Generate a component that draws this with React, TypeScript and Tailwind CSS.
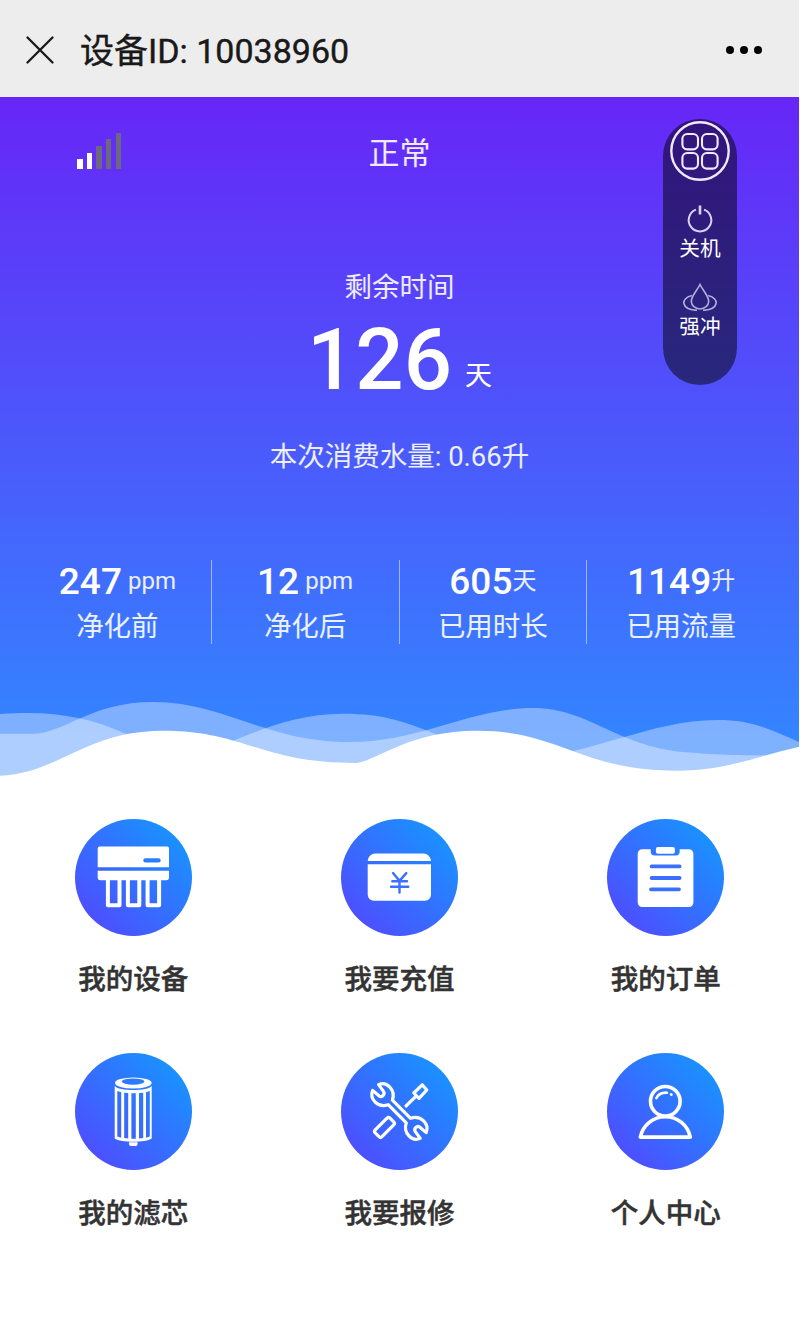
import type { ReactNode } from "react";

const stats = [
  { value: "247", unit: "ppm", label: "净化前", spaced: true },
  { value: "12", unit: "ppm", label: "净化后", spaced: true },
  { value: "605", unit: "天", label: "已用时长", spaced: false },
  { value: "1149", unit: "升", label: "已用流量", spaced: false },
];

const signalBars = [
  "h-[10px] bg-white",
  "h-[16px] bg-white",
  "h-[23px] bg-[#6d6780]",
  "h-[30px] bg-[#6d6780]",
  "h-[36px] bg-[#6d6780]",
];

function DeviceIcon() {
  return (
    <>
      <path
        fill="#fff"
        fillRule="evenodd"
        d="M24.5 27.6H92.2a1.8 1.8 0 0 1 1.8 1.8V48.3H22.7V29.4a1.8 1.8 0 0 1 1.8-1.8ZM70.4 39.3a2.1 2.1 0 0 0 0 4.3H83.6a2.1 2.1 0 0 0 0-4.3Z"
      />
      <path fill="#fff" d="M22.7 51.8H94V58.5a2.8 2.8 0 0 1-2.8 2.8H25.5a2.8 2.8 0 0 1-2.8-2.8Z" />
      <path
        stroke="#fff"
        strokeWidth="4"
        strokeLinejoin="round"
        fill="none"
        d="M32.9 60V86.2H44.5V60M52.9 60V86.2H64.3V60M72.6 60V86.2H84.1V60"
      />
    </>
  );
}

function RechargeIcon() {
  return (
    <>
      <path fill="#fff" d="M26.7 42a7.6 7.6 0 0 1 7.6-7.4H82.4a7.6 7.6 0 0 1 7.6 7.4Z" />
      <path fill="#fff" d="M26.7 45.3H90V75.8a6 6 0 0 1-6 6H32.7a6 6 0 0 1-6-6Z" />
      <path
        stroke="#3a70fc"
        strokeWidth="2.4"
        strokeLinecap="round"
        fill="none"
        d="M52 54.1 58.5 61.8 65.3 54.1M51.3 62.3H66M50 67.7H67.3M58.5 62V73.5"
      />
    </>
  );
}

function OrderIcon() {
  return (
    <g transform="translate(.4 -.7)">
      <path
        fill="#fff"
        d="M34.8 31H43.3V33.3a4 4 0 0 0 4 4H68.3a4 4 0 0 0 4-4V31H81.5A4.5 4.5 0 0 1 86 35.5V84.2a4.5 4.5 0 0 1-4.5 4.5H34.8a4.5 4.5 0 0 1-4.5-4.5V35.5A4.5 4.5 0 0 1 34.8 31Z"
      />
      <rect x="48.5" y="28.7" width="19" height="6.7" rx="2" fill="#fff" />
      <path stroke="#3a70fc" strokeWidth="3.8" strokeLinecap="round" d="M44.2 48.1H72.2M44.2 59.7H72.2M43.6 71H71.6" />
    </g>
  );
}

function FilterIcon() {
  return (
    <>
      <path
        fill="#fff"
        fillRule="evenodd"
        d="M40 30a18.3 5.6 0 0 1 36.6 0a18.3 5.6 0 0 1-36.6 0ZM46.8 28.6a11.3 3.2 0 0 0 22.6 0a11.3 3.2 0 0 0-22.6 0Z"
      />
      <path
        fill="#fff"
        fillRule="evenodd"
        d="M39.7 32.7C43 38.5 73.5 38.5 76.7 32.7V85.5C71 89.8 45.5 89.8 39.7 85.5ZM42.3 38V83.6L46.2 84.7V39.2ZM49.2 39.7V85L53.2 85.5V40ZM56.4 40.2V85.7H60.8V40.2ZM64 40V85.5L68.2 85V39.7ZM71 39.2V84.7L74.8 83.6V38Z"
      />
      <path fill="#fff" d="M54 89.2H62.6V91.1a2 2 0 0 1-2 2H56a2 2 0 0 1-2-2Z" />
    </>
  );
}

function RepairIcon() {
  return (
    <g stroke="#fff" strokeWidth="3.2" strokeLinejoin="round" strokeLinecap="round" fill="none">
      <path d="M37.6 31.6C45.5 28 55 36.5 51.4 47.2L69.6 65.3C80 61.8 88.6 71 85.2 79.6L78.6 74C76.2 72.2 72.3 75.6 74.3 78.6L79.2 85.4C71.2 89 61.8 80.5 65.3 69.8L47.2 51.7C36.8 55.2 28.2 46 31.6 37.4L38.2 43C40.6 44.8 44.5 41.4 42.5 38.4Z" />
      <path d="M81.2 31.8 85.8 37 78 45.3 72.8 40ZM74.6 43.6 65 53" />
      <path d="M46 65.2Q47.5 63.8 49 65.2L52.7 68.9Q54.2 70.4 52.7 71.9L41 83.7Q39.5 85.2 38 83.7L34.2 79.9Q32.7 78.4 34.2 76.9Z" />
    </g>
  );
}

function ProfileIcon() {
  return (
    <g stroke="#fff" strokeWidth="3.6" strokeLinejoin="round" strokeLinecap="round" fill="none">
      <circle cx="58.3" cy="48.3" r="14.8" />
      <path d="M33.3 84.1C36 72 46 63.7 58.3 63.7S80.8 72 83.3 84.1Z" />
      <path strokeWidth="2.6" d="M49.3 45.2C51.2 41.3 55.2 39.4 60 39.7M64 41.4 64.5 41.7" />
    </g>
  );
}

const menu: { label: string; icon: ReactNode }[] = [
  { label: "我的设备", icon: <DeviceIcon /> },
  { label: "我要充值", icon: <RechargeIcon /> },
  { label: "我的订单", icon: <OrderIcon /> },
  { label: "我的滤芯", icon: <FilterIcon /> },
  { label: "我要报修", icon: <RepairIcon /> },
  { label: "个人中心", icon: <ProfileIcon /> },
];

function TitleBar() {
  return (
    <header className="flex h-[97px] items-center bg-[#ededed] pt-0.5 pr-[37px] pl-[26px] text-[#191919]">
      <svg width="28" height="28" viewBox="0 0 28 28" stroke="currentColor" strokeWidth="2.3" strokeLinecap="round">
        <path d="M1.5 1.5 26.5 26.5M26.5 1.5 1.5 26.5" />
      </svg>
      <h1 className="ml-[26px] pt-0.5 text-[34px] leading-[48px] [-webkit-text-stroke:0.4px]">设备ID: 10038960</h1>
      <div className="ml-auto flex gap-[6px]">
        <span className="size-2 rounded-full bg-black" />
        <span className="size-2 rounded-full bg-black" />
        <span className="size-2 rounded-full bg-black" />
      </div>
    </header>
  );
}

function QuickPanel() {
  return (
    <aside className="absolute top-[22px] left-[663px] flex h-[266px] w-[74px] flex-col items-center rounded-full bg-black/50 text-[20.7px] leading-7">
      <svg className="mt-[1.5px]" width="60" height="60" viewBox="0 0 60 60" fill="none" stroke="#f1e9ff">
        <circle cx="30" cy="30" r="28.7" strokeWidth="2.4" />
        <g strokeWidth="2.1">
          <rect x="12.4" y="13" width="15.6" height="15.4" rx="4.8" />
          <rect x="32" y="13" width="15.6" height="15.4" rx="4.8" />
          <rect x="12.4" y="32" width="15.6" height="15.6" rx="4.8" />
          <rect x="32" y="32" width="15.6" height="15.6" rx="4.8" />
        </g>
      </svg>
      <svg className="mt-6" width="28" height="28" viewBox="0 0 28 28" fill="none" stroke="#d9d2f2" strokeWidth="2">
        <path d="M10 4.6A11.3 11.3 0 1 0 18 4.6" />
        <path d="M14 .5V9.5" strokeWidth="2.6" />
      </svg>
      <span className="mt-0.5">关机</span>
      <svg className="mt-5" width="36" height="28" viewBox="0 0 36 28" fill="none" stroke="#b3aedb" strokeWidth="1.6">
        <path d="M18 1.5C15.5 7 9.3 12.8 9.3 18.2a8.7 7.8 0 0 0 17.4 0C26.7 12.8 20.5 7 18 1.5Z" />
        <path d="M9.8 12.5C-2 15.5-1 26.5 15 27.3M26.2 12.5C38 15.5 37 26.5 21 27.3" />
      </svg>
      <span className="mt-0.5">强冲</span>
    </aside>
  );
}

function Waves() {
  return (
    <svg className="mt-14 block" width="799" height="80" viewBox="0 0 799 80" fill="#fff">
      <path
        fillOpacity="0.37"
        d="M0 14C10 13 18 13 27 13C65 13 95 20 125 33.5C150 46 175 52 200 52C235 44 280 13.7 343 13.7C385 13.7 405 22 437 34.5C470 50 500 56 530 56C590 56 650 20 717 20C750 20 765 27 799 42V81H0Z"
      />
      <path
        fillOpacity="0.37"
        d="M0 33.8H32C65 33.8 90 2 153 2C225 2 265 42 350 42C420 42 470 8 533 8C590 8 620 49 690 52.5C715 55 740 55.3 767 55.3L799 56V81H0Z"
      />
      <path d="M0 75.7C60 73 85 30.7 163 30.7C245 30.7 260 63.2 357 63C380 59 410 30.7 477 30.7C560 30.7 580 70.7 677 70.7C725 70.7 755 57 799 46.7V81H0Z" />
    </svg>
  );
}

function Hero() {
  return (
    <section className="relative bg-linear-to-b/srgb from-[#6726f7] to-[#3385ff] to-[645px] text-white">
      <div className="grid h-[110px] grid-cols-3 items-center">
        <div className="-mt-0.5 ml-[77px] flex w-[44px] items-end justify-between">
          {signalBars.map((bar, i) => (
            <span key={i} className={`w-[5.5px] ${bar}`} />
          ))}
        </div>
        <span className="pt-1 text-center text-[31px] text-white/90">正常</span>
      </div>
      <QuickPanel />
      <div className="mt-[61px] text-center text-[27.5px] leading-10 text-white/90">剩余时间</div>
      <div className="mt-[9px] flex h-[86px] items-baseline justify-center gap-[13px]">
        <span className="text-[85px] leading-[86px] font-medium">126</span>
        <span className="relative -top-1 text-[27px] leading-8">天</span>
      </div>
      <div className="mt-[34px] text-center text-[27.5px] leading-10 text-white/90">本次消费水量: 0.66升</div>
      <div className="mt-[83px] grid grid-cols-4 px-6">
        {stats.map((item) => (
          <div key={item.label} className="h-[84px] border-r border-white/50 text-center last:border-r-0">
            <div className="flex h-[42px] items-center justify-center">
              <span className="pt-0.5 text-[37px] leading-[42px] font-medium">{item.value}</span>
              <span className={`text-[24px] leading-[42px] text-white/90 ${item.spaced ? "ml-[6px]" : ""}`}>{item.unit}</span>
            </div>
            <div className="mt-[5px] text-[27.5px] leading-10 text-white/90">{item.label}</div>
          </div>
        ))}
      </div>
      <Waves />
    </section>
  );
}

export default function App() {
  return (
    <div className="min-h-[1318px] bg-white font-['Roboto','Noto_Sans_CJK_SC',sans-serif]">
      <div className="w-[799px]">
        <TitleBar />
        <Hero />
        <nav className="mt-[39px] grid grid-cols-3 gap-y-[55px]">
          {menu.map((item) => (
            <a key={item.label} className="flex flex-col items-center">
              <span className="size-[117px] rounded-full bg-linear-to-tr/srgb from-[#4c50ff] from-15% to-[#1b90ff] to-85%">
                <svg width="117" height="117" viewBox="0 0 117 117">
                  {item.icon}
                </svg>
              </span>
              <span className="mt-[22px] h-10 pt-0.5 text-[27.5px] leading-10 font-medium text-[#333] [-webkit-text-stroke:0.5px]">
                {item.label}
              </span>
            </a>
          ))}
        </nav>
      </div>
    </div>
  );
}
